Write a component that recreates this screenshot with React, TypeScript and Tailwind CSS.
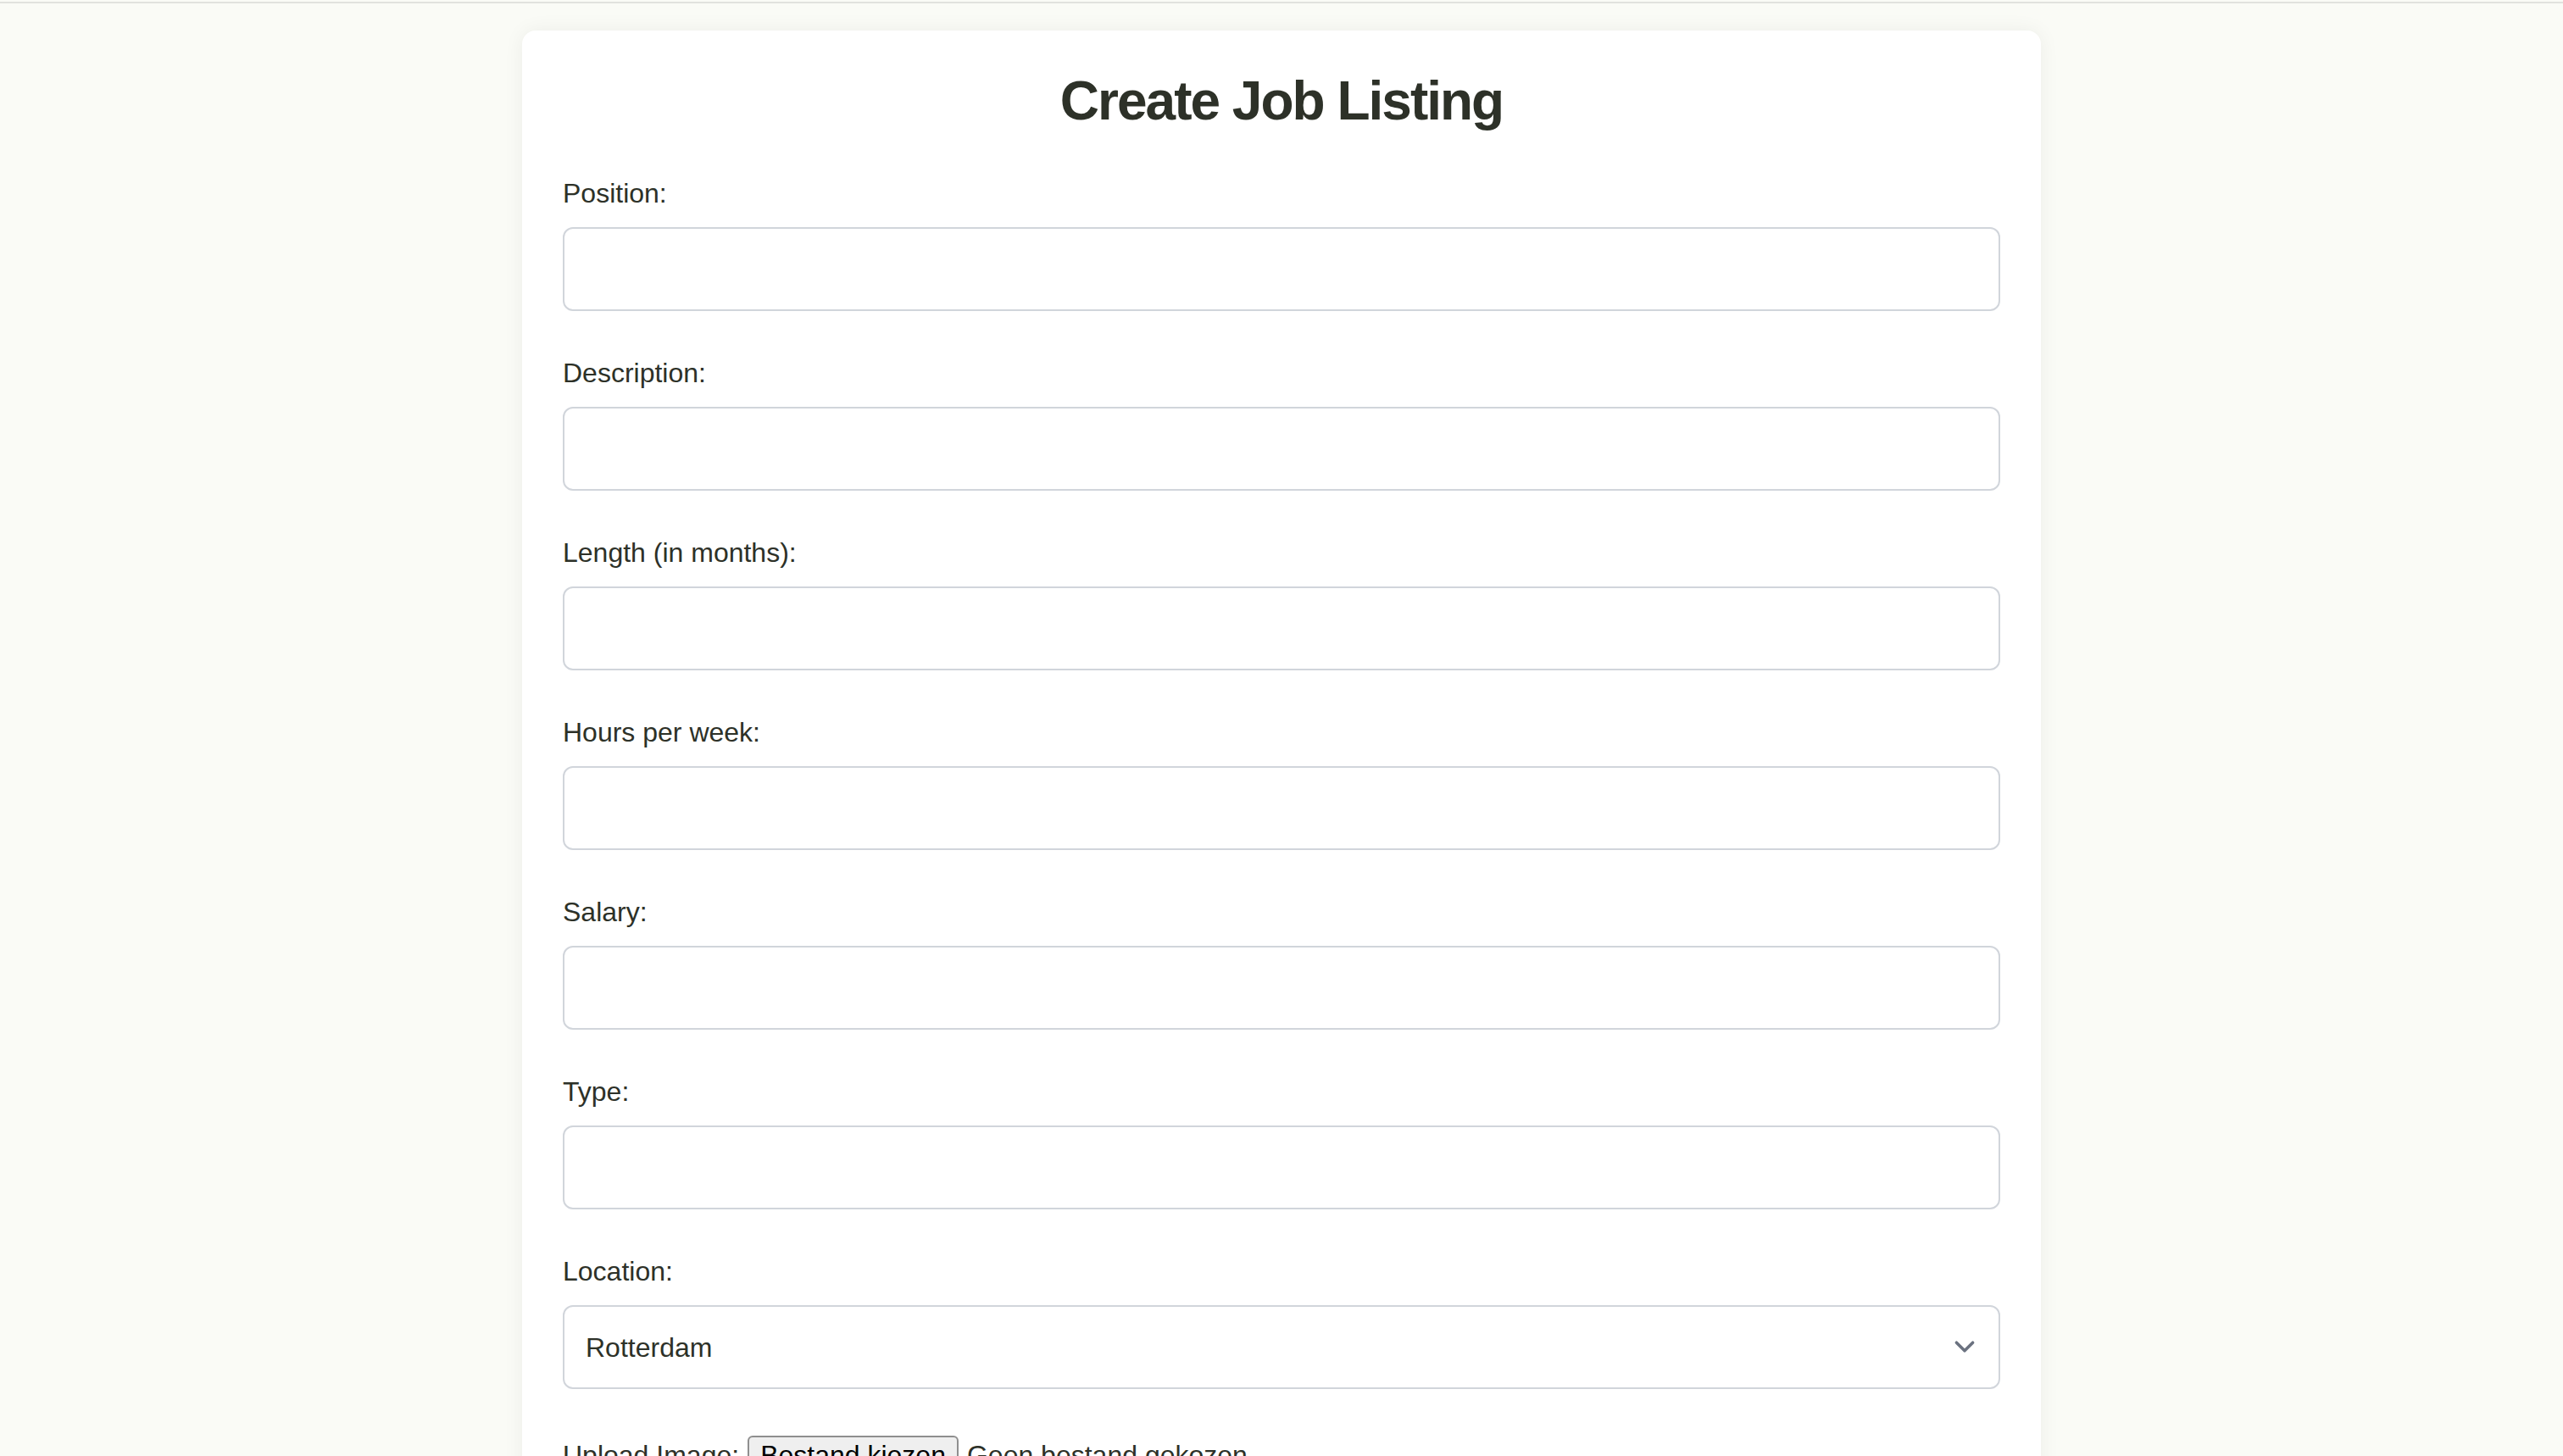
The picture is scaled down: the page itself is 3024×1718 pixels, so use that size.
import { useState } from "react";

const FIELDS = [
  { id: "position", label: "Position:" },
  { id: "description", label: "Description:" },
  { id: "length", label: "Length (in months):" },
  { id: "hours", label: "Hours per week:" },
  { id: "salary", label: "Salary:" },
  { id: "type", label: "Type:" },
];

const LOCATIONS = ["Rotterdam", "Amsterdam", "Utrecht", "Den Haag", "Eindhoven"];

export default function App() {
  const [values, setValues] = useState<Record<string, string>>({});
  const [location, setLocation] = useState("Rotterdam");

  return (
    <div className="min-h-screen bg-[#fafbf6] font-['Liberation_Sans',Arial,sans-serif] text-[#2d3128]">
      {/* top rule */}
      <div className="h-[4px] border-b-2 border-[#e1e2de]" />

      <main className="mx-auto mt-[32px] w-[1792px] rounded-[16px] bg-white px-[48px] pt-[46px] pb-[96px] shadow-[0_0_24px_rgba(0,0,0,0.06)]">
        <h1 className="text-center text-[64px] font-bold leading-[74px] tracking-[-2px] text-[#2d3128]">
          Create Job Listing
        </h1>

        <form className="mt-[54px]">
          {FIELDS.map((f) => (
            <div key={f.id} className="mb-[55px]">
              <label htmlFor={f.id} className="block text-[32px] leading-[37px]">
                {f.label}
              </label>
              <input
                id={f.id}
                type="text"
                value={values[f.id] ?? ""}
                onChange={(e) => setValues({ ...values, [f.id]: e.target.value })}
                className="mt-[21px] block h-[99px] w-full rounded-[12px] border-2 border-[#d1d5db] bg-white px-[26px] text-[32px] outline-none"
              />
            </div>
          ))}

          {/* Location */}
          <div className="mb-[55px]">
            <label htmlFor="location" className="block text-[32px] leading-[37px]">
              Location:
            </label>
            <div className="relative mt-[21px]">
              <select
                id="location"
                value={location}
                onChange={(e) => setLocation(e.target.value)}
                className="block h-[99px] w-full appearance-none rounded-[12px] border-2 border-[#d1d5db] bg-white pl-[25px] pr-[80px] text-[32px] text-[#2d3128] outline-none"
              >
                {LOCATIONS.map((l) => (
                  <option key={l} value={l}>
                    {l}
                  </option>
                ))}
              </select>
              <svg
                className="pointer-events-none absolute right-[18px] top-[25px] h-[48px] w-[48px]"
                viewBox="0 0 20 20"
                fill="none"
              >
                <path
                  d="M6 8l4 4 4-4"
                  stroke="#6b7280"
                  strokeWidth="1.5"
                  strokeLinecap="round"
                  strokeLinejoin="round"
                />
              </svg>
            </div>
          </div>

          {/* Upload */}
          <div className="flex items-center text-[32px] leading-[37px]">
            <span>Upload Image:</span>
            <span className="ml-[10px] rounded-[6px] border-2 border-[#8f8f8f] bg-[#efefef] px-[13px] py-[3px] text-black">
              Bestand kiezen
            </span>
            <span className="ml-[10px] text-[#2d3128]">Geen bestand gekozen</span>
          </div>

          <button
            type="button"
            className="mt-[48px] w-full rounded-[12px] bg-[#2d3128] py-[24px] text-[32px] font-bold text-white"
          >
            Create Listing
          </button>
        </form>
      </main>
    </div>
  );
}
